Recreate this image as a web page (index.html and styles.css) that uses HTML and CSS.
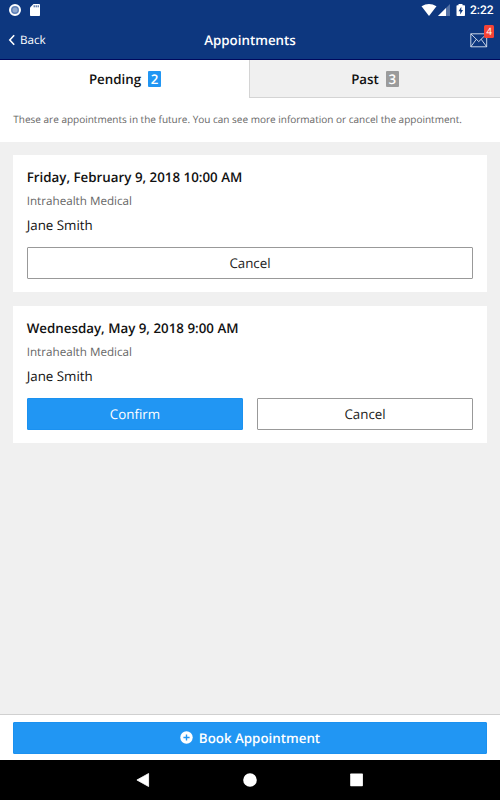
FILE: index.html
```html
<!DOCTYPE html>
<html lang="en">
<head>
<meta charset="utf-8">
<title>Appointments</title>
<link rel="stylesheet" href="styles.css">
</head>
<body>
<div class="screen">
  <div class="status">
    <svg class="status-left" width="42" height="20" viewBox="0 0 42 20">
      <circle cx="15" cy="10" r="5" fill="#5e7fb6" stroke="#fff" stroke-width="2"/>
      <circle cx="15" cy="10" r="2.5" fill="#8fa7cd"/>
      <path d="M33.5 4H39.200Q40 4 40 4.800V15.200Q40 16 39.200 16H30.800Q30 16 30 15.200V7.600Z" fill="#fff"/>
      <path d="M34.200 5.300V7.300M36.200 5.300V7.300M38.200 5.300V7.300" stroke="#0d377f" stroke-width=".9"/>
    </svg>
    <svg class="status-right" width="46" height="20" viewBox="0 0 46 20">
      <path d="M1.500 6.300Q9 1.500 16.500 6.300L9 16Z" fill="#fff"/>
      <path d="M30 4V16H18Z" fill="#5573a6"/>
      <path d="M26 8V16H18Z" fill="#fff"/>
      <path d="M38.500 4H42.500V5.200H44.300Q45 5.200 45 5.900V15.300Q45 16 44.300 16H37.200Q36.500 16 36.500 15.300V5.900Q36.500 5.200 37.200 5.200H38.500Z" fill="#fff"/>
      <path d="M41.300 6.700L38.600 11.200H40.200V14.500L43 10H41.300Z" fill="#0d377f"/>
    </svg>
    <span class="clock">2:22</span>
  </div>
  <header class="header">
    <div class="back">
      <svg width="8" height="12" viewBox="0 0 8 12"><path d="M6.200 1.300L1.800 6L6.200 10.700" fill="none" stroke="#fff" stroke-width="1.600"/></svg>
      <span>Back</span>
    </div>
    <h1>Appointments</h1>
    <div class="mail">
      <svg width="18" height="15" viewBox="0 0 18 15"><path d="M.8.8H16.700V13.800H.8ZM.8.8L8.750 8.600L16.700.8M.8 13.800L6.300 6.300M16.700 13.800L11.200 6.300" fill="none" stroke="#dce4f0" stroke-width=".9"/></svg>
      <span class="mail-badge">4</span>
    </div>
  </header>
  <nav class="tabs">
    <div class="tab active">Pending <span class="count">2</span></div>
    <div class="tab">Past <span class="count">3</span></div>
  </nav>
  <p class="info">These are appointments in the future. You can see more information or cancel the appointment.</p>
  <main class="list">
    <section class="card">
      <h2>Friday, February 9, 2018 10:00 AM</h2>
      <p class="place">Intrahealth Medical</p>
      <p class="person">Jane Smith</p>
      <div class="actions"><button class="btn">Cancel</button></div>
    </section>
    <section class="card">
      <h2>Wednesday, May 9, 2018 9:00 AM</h2>
      <p class="place">Intrahealth Medical</p>
      <p class="person">Jane Smith</p>
      <div class="actions"><button class="btn primary">Confirm</button><button class="btn">Cancel</button></div>
    </section>
  </main>
  <footer class="footer">
    <button class="btn primary book">
      <svg width="13" height="13" viewBox="0 0 13 13"><circle cx="6.500" cy="6.500" r="6.200" fill="#fff"/><path d="M6.500 3.400V9.600M3.400 6.500H9.600" stroke="#2196f3" stroke-width="1.400"/></svg>
      <span>Book Appointment</span>
    </button>
  </footer>
  <div class="navbar">
    <svg width="14" height="14" viewBox="0 0 14 14"><path d="M12.600 .5V13.500L.9 7Z" fill="#fff" stroke="#fff" stroke-width=".8" stroke-linejoin="round"/></svg>
    <svg width="14" height="14" viewBox="0 0 14 14"><circle cx="7" cy="7" r="6.800" fill="#fff"/></svg>
    <svg width="14" height="14" viewBox="0 0 14 14"><rect x=".2" y=".5" width="12.700" height="12.700" rx=".7" fill="#fff"/></svg>
  </div>
</div>
</body>
</html>
```
FILE: styles.css
```css
* { box-sizing: border-box; }
body { margin: 0; font-family: "Open Sans", sans-serif; color: #111; text-rendering: geometricPrecision; }
h1, h2, p { margin: 0; }
svg { display: block; flex: none; }
.screen { width: 500px; height: 800px; display: flex; flex-direction: column; background: #f0f0f0; overflow: hidden; }
.status { height: 20px; flex: none; display: flex; background: #0d377f; color: #fff; }
.status-right { margin-left: auto; margin-right: 4px; }
.clock { width: 30px; font: 500 12px/21px Roboto, sans-serif; }
.status-right { margin-right: 4px; }
.header { height: 40px; flex: none; display: grid; grid-template-columns: 1fr auto 1fr; align-items: center; background: #0d377f; border-bottom: 1px solid #00095e; color: #fff; }
.back { display: flex; align-items: center; gap: 4px; padding: 1px 0 0 8px; font-size: 11.67px; line-height: 18px; }
.back span { padding-top: 2px; }
.header h1 { font-size: 13.33px; line-height: 18px; font-weight: 600; padding-top: 1px; }
.mail { position: relative; justify-self: end; margin-right: 12px; padding-top: 1px; }
.mail-badge { position: absolute; left: 14px; top: -7px; width: 10px; height: 13px; border-radius: 1.500px; background: #f44336; font-size: 10px; font-weight: 500; line-height: 13px; text-align: center; }
.tabs { height: 38px; flex: none; display: flex; background: #fff; }
.tab { width: 251px; display: flex; justify-content: center; align-items: center; gap: 7px; font-size: 13.33px; font-weight: 600; line-height: 18px; background: #f0f0f0; border-bottom: 1px solid #d4d4d4; border-left: 1px solid #d4d4d4; }
.tab.active { width: 249px; background: #fff; border-color: #fff; }
.count { width: 13px; height: 16px; border-radius: 1px; background: #9b9b9b; color: #fff; text-align: center; line-height: 16px; }
.active .count { background: #2196f3; }
.info { height: 44px; flex: none; padding: 14px 13px 0 13.300px; background: #fff; font-size: 10px; line-height: 15px; color: #666; }
.list { flex: 1; padding: 13px; display: flex; flex-direction: column; gap: 13.500px; }
.card { height: 137.400px; padding: 12px 13.700px; background: #fff; }
.card h2 { font-size: 13.33px; font-weight: 600; line-height: 20px; }
.place { margin-top: 6px; font-size: 11.67px; line-height: 18px; color: #666; }
.person { margin-top: 4px; font-size: 13.33px; line-height: 20px; }
.actions { display: flex; gap: 13.600px; margin-top: 12px; }
.btn { flex: 1; height: 32px; padding: 0; border: 1px solid #999; border-radius: 1px; background: #fff; color: #222; font-family: inherit; font-size: 13.33px; line-height: 20px; text-rendering: inherit; }
.btn.primary { background: #2196f3; border-color: #1b91f0; color: #fff; }
.footer { height: 46px; flex: none; padding: 7px 13px; border-top: 1px solid #d0d0d0; background: #fff; display: flex; }
.btn.book { display: flex; align-items: center; justify-content: center; gap: 6px; padding-bottom: 1px; font-weight: 600; }
.navbar { height: 40px; flex: none; display: flex; justify-content: center; align-items: center; gap: 93px; background: #000; }
```
